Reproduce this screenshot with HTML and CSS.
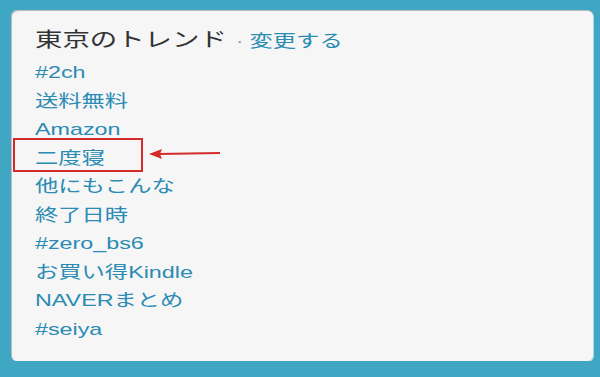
FILE: index.html
```html
<!DOCTYPE html>
<html lang="ja">
<head>
  <meta charset="UTF-8">
  <title>東京のトレンド</title>
  <link rel="stylesheet" href="styles.css">
</head>
<body>

  <!-- Trends panel -->
  <div class="trends">
    <div class="trends-inner">
      <div class="trends-title">
        <span class="city">東京のトレンド</span>
        <span class="dot">·</span>
        <a href="#" class="change">変更する</a>
      </div>
      <ul class="trend-list">
        <li><a href="#">#2ch</a></li>
        <li><a href="#">送料無料</a></li>
        <li><a href="#">Amazon</a></li>
        <li><a href="#">二度寝</a></li>
        <li><a href="#">他にもこんな</a></li>
        <li><a href="#">終了日時</a></li>
        <li><a href="#">#zero_bs6</a></li>
        <li><a href="#">お買い得Kindle</a></li>
        <li><a href="#">NAVERまとめ</a></li>
        <li><a href="#">#seiya</a></li>
      </ul>
    </div>

    <!-- Highlight on 二度寝 -->
    <div class="mark-box"></div>
    <svg class="mark-arrow" width="74" height="14" viewBox="0 0 74 14">
      <line x1="10" y1="7" x2="72" y2="6" stroke="#d42a2a" stroke-width="2"/>
      <polygon points="1,7 14,2 12,7 14,12" fill="#d42a2a"/>
    </svg>
  </div>

</body>
</html>
```

FILE: styles.css
```css
body {
  margin: 0;
  background: #3fa7c4;
  font-family: "Liberation Sans", "Noto Sans CJK JP", sans-serif;
}

/* Panel */
.trends {
  position: relative;
  margin: 10px 7px 0 11px;
  height: 351px;
  background: #f6f6f6;
  border-radius: 6px;
  box-shadow: inset 1px 1px 1px rgba(0, 0, 0, 0.25), 1px 1px 0 #a8d8e6;
  padding: 15px 0 0 24px;
  box-sizing: border-box;
}

/* the screenshot is stretched sideways */
.trends-inner {
  width: 300px;
  transform: scaleX(1.37);
  transform-origin: left top;
}

.trends-title {
  line-height: 30px;
  height: 30px;
  white-space: nowrap;
}

.trends-title .city {
  font-size: 20px;
  color: #333;
}

.trends-title .dot {
  font-size: 17px;
  color: #999;
  margin-left: 2px;
}

.trends-title .change {
  font-size: 17px;
  color: #2a8bb3;
  text-decoration: none;
}

.trend-list {
  list-style: none;
  margin: 4px 0 0;
  padding: 0;
}

.trend-list li {
  font-size: 17px;
  line-height: 28.5px;
  height: 28.5px;
  white-space: nowrap;
}

.trend-list a {
  color: #2a8bb3;
  text-decoration: none;
}

/* Red marker */
.mark-box {
  position: absolute;
  left: 2px;
  top: 128px;
  width: 126px;
  height: 30px;
  border: 2px solid #d42a2a;
}

.mark-arrow {
  position: absolute;
  left: 137px;
  top: 137px;
}
```
